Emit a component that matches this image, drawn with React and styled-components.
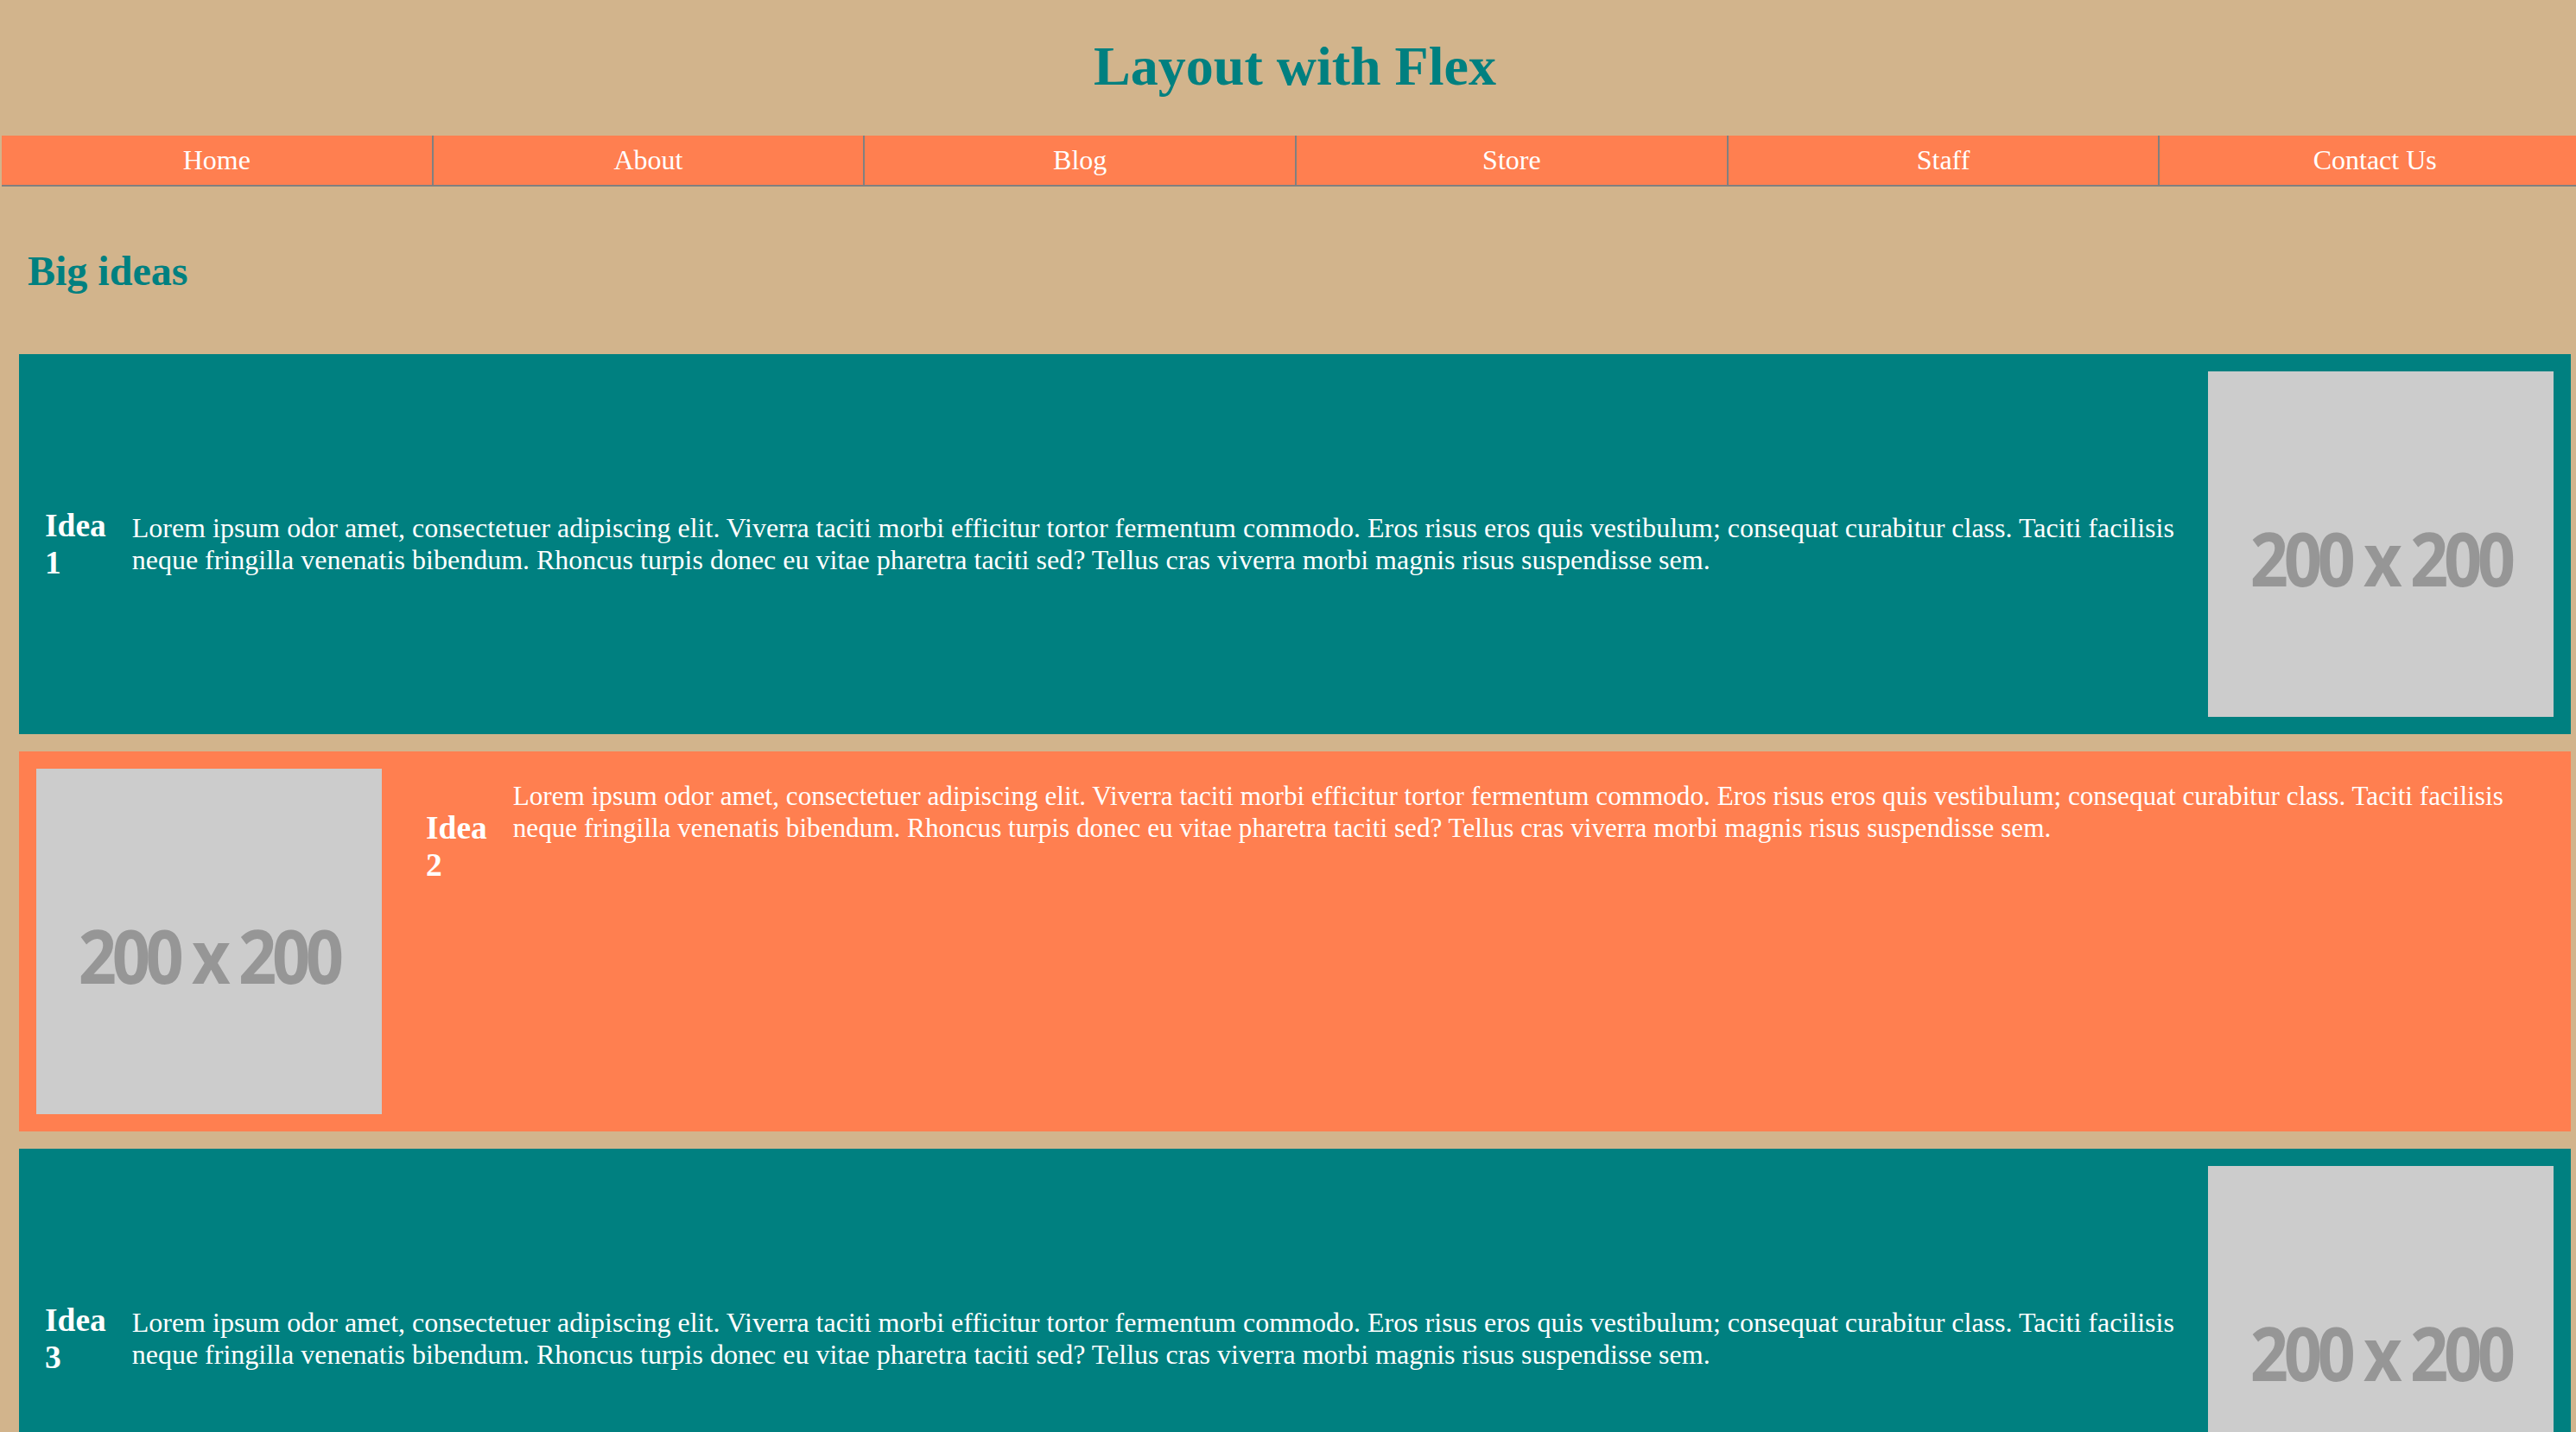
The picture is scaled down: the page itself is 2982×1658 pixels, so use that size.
import React from "react"
import styled, { createGlobalStyle } from "styled-components"

const GlobalStyle = createGlobalStyle`
  body {
    margin: 0;
    background-color: #d2b48c;
    font-family: "Liberation Serif", "Times New Roman", serif;
    font-size: 32px;
    color: white;
  }
  #root {
    overflow: hidden;
  }
`

// the page is a little wider than the window, as in the original
const Page = styled.div`
  width: 2998px;
`

const Title = styled.h1`
  margin: 40px 0 43px;
  text-align: center;
  font-size: 64px;
  line-height: normal;
  color: #008080;
`

const Nav = styled.ul`
  display: flex;
  margin: 0;
  padding: 0 0 0 2px;
  list-style: none;
`

const NavItem = styled.li`
  flex: 1;
  padding: 10px 0;
  text-align: center;
  line-height: normal;
  background-color: #ff7f50;
  border-bottom: 2px solid #808080;
  border-right: 2px solid #808080;
  &:last-child {
    border-right: none;
  }
`

const Main = styled.main`
  padding: 0 22px 20px;
`

const Heading = styled.h2`
  margin: 70px 0 69px 10px;
  font-size: 48px;
  line-height: normal;
  color: #008080;
`

const IdeaList = styled.div`
  display: flex;
  flex-direction: column;
  gap: 20px;
`

const Idea = styled.section`
  display: flex;
  align-items: ${props => (props.$flip ? "flex-start" : "center")};
  padding: 20px;
  background-color: ${props => props.$color};
`

const IdeaTitle = styled.h3`
  width: min-content;
  flex: none;
  margin: ${props => (props.$flip ? "47px 30px 0 51px" : "0 30px 0 10px")};
  font-size: 37.44px;
  line-height: normal;
`

const IdeaText = styled.p`
  flex: 1;
  margin: ${props => (props.$flip ? "14px 0 0 0" : "0 20px 0 0")};
  font-size: ${props => (props.$flip ? "31.2px" : "32px")};
  line-height: ${props => (props.$flip ? "36.8px" : "normal")};
`

const Placeholder = styled.div`
  flex: none;
  width: 400px;
  height: 400px;
  display: flex;
  align-items: center;
  justify-content: center;
  padding-top: 30px;
  box-sizing: border-box;
  background-color: #cccccc;
  color: #969696;
  font-family: "Open Sans", "DejaVu Sans", sans-serif;
  font-weight: 700;
  font-size: 86px;
  letter-spacing: -6px;
  & > span {
    display: inline-block;
    transform: scaleX(0.9);
  }
`

const lorem =
  "Lorem ipsum odor amet, consectetuer adipiscing elit. Viverra taciti morbi efficitur tortor fermentum commodo. Eros risus eros quis vestibulum; consequat curabitur class. Taciti facilisis neque fringilla venenatis bibendum. Rhoncus turpis donec eu vitae pharetra taciti sed? Tellus cras viverra morbi magnis risus suspendisse sem."

const links = ["Home", "About", "Blog", "Store", "Staff", "Contact Us"]

const ideas = [
  { n: 1, color: "#008080", flip: false },
  { n: 2, color: "#ff7f50", flip: true },
  { n: 3, color: "#008080", flip: false },
]

function Image() {
  return (
    <Placeholder>
      <span>200 x 200</span>
    </Placeholder>
  )
}

function App() {
  return (
    <Page>
      <GlobalStyle />
      <Title>Layout with Flex</Title>
      <Nav>
        {links.map(l => (
          <NavItem key={l}>{l}</NavItem>
        ))}
      </Nav>
      <Main>
        <Heading>Big ideas</Heading>
        <IdeaList>
          {ideas.map(idea => (
            <Idea key={idea.n} $color={idea.color} $flip={idea.flip}>
              {idea.flip && <Image />}
              <IdeaTitle $flip={idea.flip}>Idea {idea.n}</IdeaTitle>
              <IdeaText $flip={idea.flip}>{lorem}</IdeaText>
              {!idea.flip && <Image />}
            </Idea>
          ))}
        </IdeaList>
      </Main>
    </Page>
  )
}

export default App
